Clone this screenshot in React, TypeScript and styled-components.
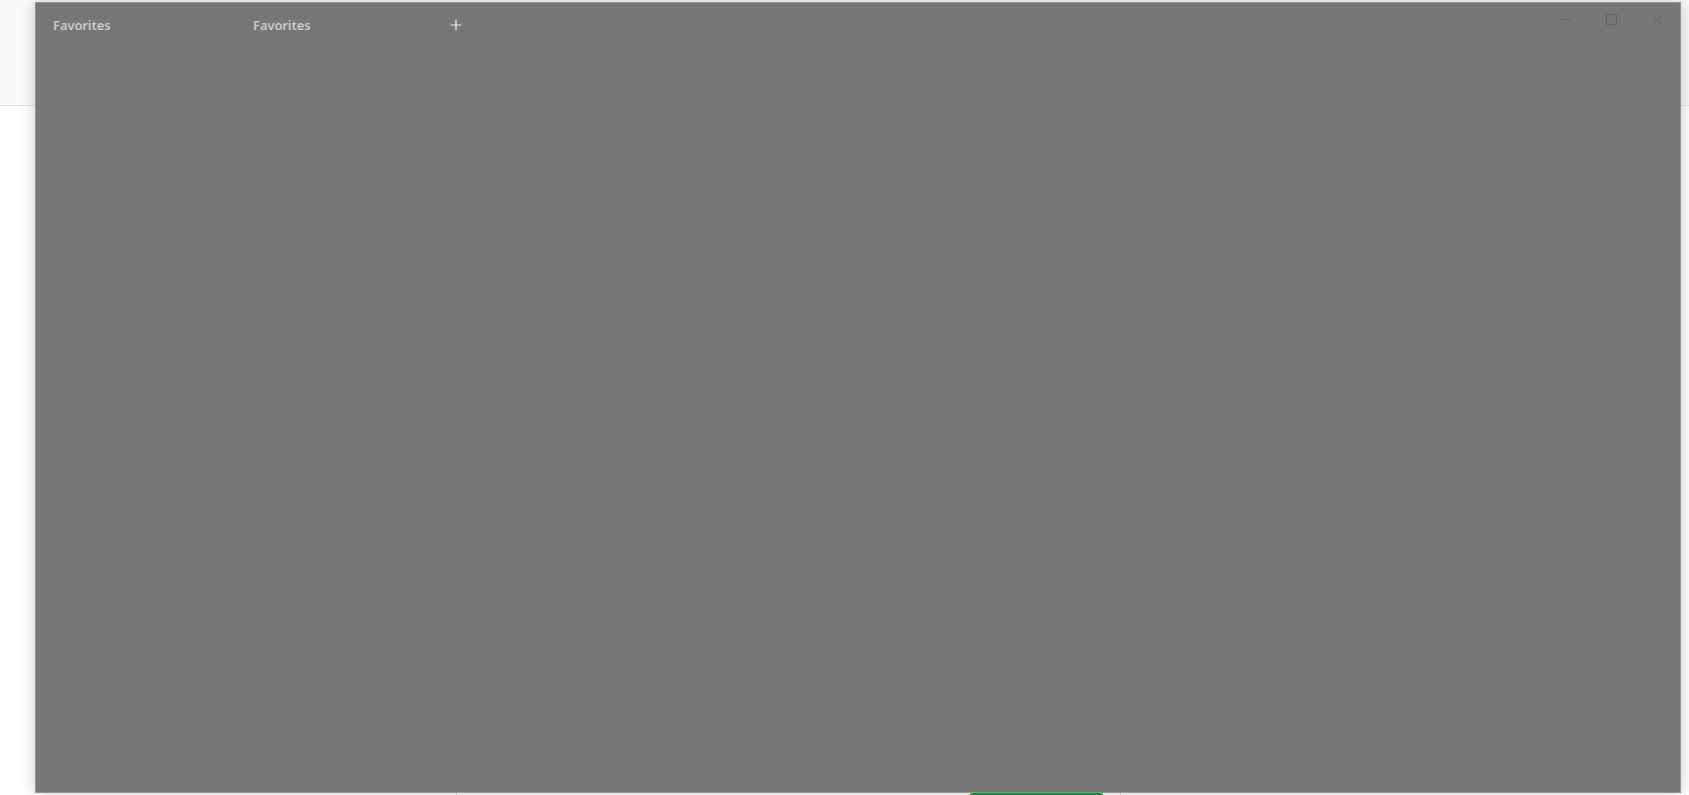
import React from "react";
import styled, { createGlobalStyle } from "styled-components";

const GlobalStyle = createGlobalStyle`
  html, body {
    margin: 0;
    padding: 0;
    width: 1689px;
    height: 795px;
    overflow: hidden;
    background: #fff;
    font-family: "Noto Sans", "Open Sans", sans-serif;
  }
`;

const Page = styled.div`
  position: relative;
  display: flex;
  flex-direction: column;
  width: 1689px;
  height: 795px;
  overflow: hidden;
`;

const TopBar = styled.div`
  height: 105px;
  flex-shrink: 0;
  background: #f8f9fb;
  border-bottom: 1px solid #e2e4e8;
`;

const Body = styled.div`
  display: flex;
  flex: 1;
`;

const Column = styled.div<{ $width?: number; $divider?: boolean }>`
  display: flex;
  flex-direction: column;
  align-items: flex-end;
  width: ${(p) => (p.$width ? `${p.$width}px` : "auto")};
  flex: ${(p) => (p.$width ? "none" : 1)};
  border-left: ${(p) => (p.$divider ? "1px solid #d4d4d4" : "none")};
  box-sizing: border-box;
`;

const GreenButton = styled.div`
  margin-top: 687px;
  margin-right: 16px;
  width: 135px;
  height: 32px;
  border-radius: 4px;
  background: #1f9f3c;
`;

const Window = styled.div`
  position: absolute;
  left: 35px;
  top: 2px;
  width: 1646px;
  height: 791px;
  box-sizing: border-box;
  background: #777777;
  border: 1px solid #959595;
  box-shadow: 0 0 14px rgba(0, 0, 0, 0.22);
  display: flex;
  flex-direction: column;
`;

const TitleBar = styled.div`
  display: flex;
  align-items: flex-start;
  height: 46px;
`;

const Tabs = styled.div`
  display: flex;
  align-items: center;
  height: 44px;
`;

const Tab = styled.div`
  display: flex;
  align-items: center;
  width: 200px;
  height: 100%;
  padding-left: 17px;
  box-sizing: border-box;
  font-size: 13px;
  font-weight: 600;
  color: #cbcbcb;
  letter-spacing: -0.1px;
  user-select: none;
`;

const AddButton = styled.div`
  display: flex;
  align-items: center;
  justify-content: center;
  width: 40px;
  height: 40px;
`;

const Spacer = styled.div`
  flex: 1;
`;

const Controls = styled.div`
  display: flex;
`;

const ControlButton = styled.div`
  display: flex;
  align-items: center;
  justify-content: center;
  width: 46px;
  height: 32px;
`;

const Content = styled.div`
  flex: 1;
`;

export default function App() {
  return (
    <>
      <GlobalStyle />
      <Page>
        <TopBar />
        <Body>
          <Column $width={456} />
          <Column $width={664} $divider>
            <GreenButton />
          </Column>
          <Column $divider />
        </Body>

        <Window>
          <TitleBar>
            <Tabs>
              <Tab>Favorites</Tab>
              <Tab>Favorites</Tab>
              <AddButton>
                <svg width="14" height="14" viewBox="0 0 14 14">
                  <path d="M7 1.5v11M1.5 7h11" stroke="#f2f2f2" strokeWidth="1.2" />
                </svg>
              </AddButton>
            </Tabs>
            <Spacer />
            <Controls>
              <ControlButton>
                <svg width="11" height="11" viewBox="0 0 11 11">
                  <path d="M0.5 5.5h10" stroke="#656565" strokeWidth="1" />
                </svg>
              </ControlButton>
              <ControlButton>
                <svg width="11" height="11" viewBox="0 0 11 11">
                  <rect x="0.5" y="0.5" width="10" height="10" fill="none" stroke="#656565" strokeWidth="1" />
                </svg>
              </ControlButton>
              <ControlButton>
                <svg width="11" height="11" viewBox="0 0 11 11">
                  <path d="M0.5 0.5l10 10M10.5 0.5l-10 10" stroke="#656565" strokeWidth="1" />
                </svg>
              </ControlButton>
            </Controls>
          </TitleBar>
          <Content />
        </Window>
      </Page>
    </>
  );
}
